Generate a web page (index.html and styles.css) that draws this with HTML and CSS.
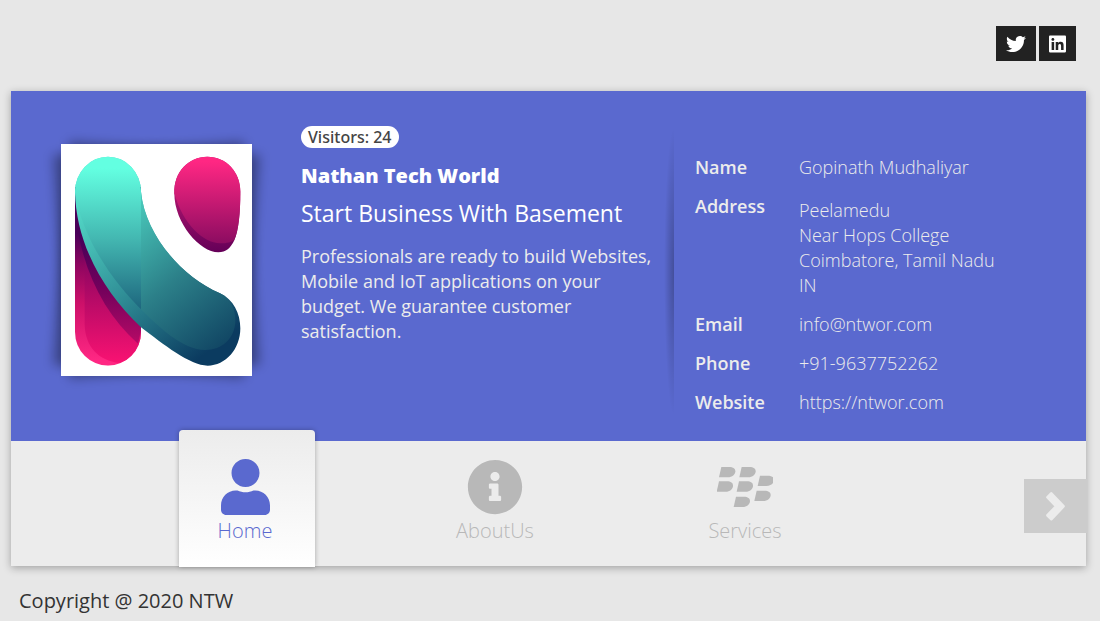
FILE: index.html
```html
<!DOCTYPE html>
<html lang="en">
<head>
<meta charset="utf-8">
<meta name="viewport" content="width=device-width, initial-scale=1">
<title>Nathan Tech World</title>
<link rel="stylesheet" href="styles.css">
</head>
<body>
<header class="social">
  <a class="social-link" href="#" aria-label="Twitter">
    <svg class="social-icon" viewBox="0 0 512 512" aria-hidden="true"><path d="M459.37 151.716c.325 4.548.325 9.097.325 13.645 0 138.72-105.583 298.558-298.558 298.558-59.452 0-114.68-17.219-161.137-47.106 8.447.974 16.568 1.299 25.34 1.299 49.055 0 94.213-16.568 130.274-44.832-46.132-.975-84.792-31.188-98.112-72.772 6.498.974 12.995 1.624 19.818 1.624 9.421 0 18.843-1.3 27.614-3.573-48.081-9.747-84.143-51.98-84.143-102.985v-1.299c13.969 7.797 30.214 12.67 47.431 13.319-28.264-18.843-46.781-51.005-46.781-87.391 0-19.492 5.197-37.36 14.294-52.954 51.655 63.675 129.3 105.258 216.365 109.807-1.624-7.797-2.599-15.918-2.599-24.04 0-57.828 46.782-104.934 104.934-104.934 30.213 0 57.502 12.67 76.67 33.137 23.715-4.548 46.456-13.32 66.599-25.34-7.798 24.366-24.366 44.833-46.132 57.827 21.117-2.273 41.584-8.122 60.426-16.243-14.292 20.791-32.161 39.308-52.628 54.253z"/></svg>
  </a>
  <a class="social-link" href="#" aria-label="LinkedIn">
    <svg class="social-icon narrow" viewBox="0 0 448 512" aria-hidden="true"><path d="M416 32H31.9C14.3 32 0 46.5 0 64.3v383.4C0 465.5 14.3 480 31.9 480H416c17.6 0 32-14.5 32-32.3V64.3c0-17.8-14.4-32.3-32-32.3zM135.4 416H69V202.2h66.5V416zm-33.2-243c-21.3 0-38.5-17.3-38.5-38.5S80.9 96 102.2 96c21.2 0 38.5 17.3 38.5 38.5 0 21.3-17.2 38.5-38.5 38.5zm282.1 243h-66.4V312c0-24.8-.5-56.7-34.5-56.7-34.6 0-39.9 27-39.9 54.9V416h-66.4V202.2h63.7v29.2h.9c8.9-16.8 30.6-34.5 62.9-34.5 67.2 0 79.7 44.3 79.7 101.9V416z"/></svg>
  </a>
</header>

<main class="card">
  <section class="profile">
    <div class="logo">
      <svg class="logo-art" viewBox="63 72 573 696" role="img" aria-label="Nathan Tech World logo">
        <defs>
          <linearGradient id="pill" gradientUnits="userSpaceOnUse" x1="0" y1="340" x2="0" y2="720"><stop offset="0" stop-color="#4a0059"/><stop offset=".25" stop-color="#8e0560"/><stop offset=".55" stop-color="#cc1069"/><stop offset="1" stop-color="#ff2783"/></linearGradient>
          <linearGradient id="pillInner" gradientUnits="userSpaceOnUse" x1="0" y1="400" x2="0" y2="730"><stop offset="0" stop-color="#830460"/><stop offset=".5" stop-color="#c00b68"/><stop offset="1" stop-color="#f91272"/></linearGradient>
          <linearGradient id="pillShade" gradientUnits="userSpaceOnUse" x1="0" y1="360" x2="0" y2="670"><stop offset="0" stop-color="#490059"/><stop offset=".5" stop-color="#76015c"/><stop offset="1" stop-color="#b50a66"/></linearGradient>
          <linearGradient id="drop" gradientUnits="userSpaceOnUse" x1="0" y1="125" x2="0" y2="370"><stop offset="0" stop-color="#ff2783"/><stop offset="1" stop-color="#8c0c61"/></linearGradient>
          <linearGradient id="dropRim" gradientUnits="userSpaceOnUse" x1="0" y1="210" x2="0" y2="395"><stop offset="0" stop-color="#b2156f"/><stop offset="1" stop-color="#650058"/></linearGradient>
          <linearGradient id="swoosh" gradientUnits="userSpaceOnUse" x1="240" y1="290" x2="550" y2="680"><stop offset="0" stop-color="#49c8ba"/><stop offset=".5" stop-color="#2c8089"/><stop offset="1" stop-color="#114664"/></linearGradient>
          <linearGradient id="rim" gradientUnits="userSpaceOnUse" x1="130" y1="230" x2="490" y2="705"><stop offset="0" stop-color="#55ddca"/><stop offset=".5" stop-color="#319198"/><stop offset="1" stop-color="#0b3b60"/></linearGradient>
          <linearGradient id="column" gradientUnits="userSpaceOnUse" x1="0" y1="145" x2="0" y2="568"><stop offset="0" stop-color="#63ffe1"/><stop offset=".5" stop-color="#43b7b1"/><stop offset="1" stop-color="#1e667e"/></linearGradient>
          <clipPath id="pillClip"><path d="M105 200V636A99 101 0 0 0 303 636V200Z"/></clipPath>
        </defs>
        <g clip-path="url(#pillClip)">
          <path fill="url(#pill)" d="M105 200H303V740H105Z"/>
          <path fill="url(#pillInner)" d="M134 380V615C136 680 175 722 238 729L310 700V380Z"/>
          <path fill="url(#pillShade)" d="M105 280C125 445 190 580 294 671L310 600V200H105Z"/>
        </g>
        <path fill="url(#rim)" d="M105 215A99 105 0 0 1 303 215C315 340 420 468 540 520C580 538 601 580 601 625C601 687 557 737 503 737C450 737 370 673 303 622C190 515 108 370 105 215Z"/>
        <path fill="url(#swoosh)" d="M303 215C315 340 420 468 540 520C570 535 586 565 586 600C586 655 547 690 495 690C430 690 360 625 303 568Z"/>
        <path fill="url(#column)" d="M105 215A99 105 0 0 1 303 215V568C240 505 130 375 105 215Z"/>
        <path fill="url(#dropRim)" d="M403 220C401 155 446 110 502 110C558 110 601 155 601 215C601 278 596 330 583 361C572 384 558 397 535 397C480 397 403 310 403 220Z"/>
        <path fill="url(#drop)" d="M403 220C401 155 446 110 502 110C558 110 601 155 601 215C601 278 596 330 583 359C574 366 562 370 540 370C490 370 428 312 403 220Z"/>
      </svg>
    </div>
    <div class="intro">
      <span class="badge">Visitors: 24</span>
      <h1 class="name">Nathan Tech World</h1>
      <h2 class="tagline">Start Business With Basement</h2>
      <p class="about">Professionals are ready to build Websites, Mobile and IoT applications on your budget. We guarantee customer satisfaction.</p>
    </div>
    <div class="contact">
      <dl class="details">
        <dt>Name</dt><dd>Gopinath Mudhaliyar</dd>
        <dt>Address</dt><dd class="address">Peelamedu<br>Near Hops College<br>Coimbatore, Tamil Nadu<br>IN</dd>
        <dt>Email</dt><dd><a href="mailto:info@ntwor.com">info@ntwor.com</a></dd>
        <dt>Phone</dt><dd>+91-9637752262</dd>
        <dt>Website</dt><dd><a href="https://ntwor.com">https://ntwor.com</a></dd>
      </dl>
    </div>
  </section>

  <nav class="tabs">
    <div class="tab-list">
      <a class="tab active" href="#home" aria-current="page">
        <svg class="tab-icon" viewBox="0 0 448 512" aria-hidden="true"><path d="M224 256c70.7 0 128-57.3 128-128S294.7 0 224 0 96 57.3 96 128s57.3 128 128 128zm89.6 32h-16.7c-22.2 10.2-46.9 16-72.9 16s-50.6-5.8-72.9-16h-16.7C60.2 288 0 348.2 0 422.4V464c0 26.5 21.5 48 48 48h352c26.5 0 48-21.5 48-48v-41.6c0-74.2-60.2-134.4-134.4-134.4z"/></svg>
        <span>Home</span>
      </a>
      <a class="tab" href="#about">
        <svg class="tab-icon" viewBox="0 0 512 512" aria-hidden="true"><path d="M256 8C119.043 8 8 119.083 8 256c0 136.997 111.043 248 248 248s248-111.003 248-248C504 119.083 392.957 8 256 8zm0 110c23.196 0 42 18.804 42 42s-18.804 42-42 42-42-18.804-42-42 18.804-42 42-42zm56 254c0 6.627-5.373 12-12 12h-88c-6.627 0-12-5.373-12-12v-24c0-6.627 5.373-12 12-12h12v-64h-12c-6.627 0-12-5.373-12-12v-24c0-6.627 5.373-12 12-12h64c6.627 0 12 5.373 12 12v100h12c6.627 0 12 5.373 12 12v24z"/></svg>
        <span>AboutUs</span>
      </a>
      <a class="tab" href="#services">
        <svg class="tab-icon" viewBox="82 42 168 168" aria-hidden="true">
          <defs><path id="key" d="M7 0H30C43 0 49 5 49 13C49 23 40 31 26 31H0Z"/></defs>
          <use href="#key" x="88" y="66"/><use href="#key" x="149" y="66"/><use href="#key" x="204" y="92"/>
          <use href="#key" x="81" y="109"/><use href="#key" x="141" y="109"/><use href="#key" x="194" y="137"/>
          <use href="#key" x="132" y="155"/>
        </svg>
        <span>Services</span>
      </a>
    </div>
    <button class="next" type="button" aria-label="Next">
      <svg class="next-icon" viewBox="0 0 57 87" aria-hidden="true"><path d="M16 5L52 43L16 81L5 70L31 43L5 16Z"/></svg>
    </button>
  </nav>
</main>

<footer class="footer">Copyright @ 2020 NTW</footer>
</body>
</html>
```

FILE: styles.css
```css
* {
  box-sizing: border-box;
}

body {
  margin: 0;
  background: #e7e7e7;
  color: #333;
  font-family: "Open Sans", sans-serif;
  font-size: 18px;
  line-height: 25px;
}

a {
  color: inherit;
  text-decoration: none;
}

svg {
  display: block;
  fill: currentColor;
}

.social {
  display: flex;
  justify-content: flex-end;
  gap: 3px;
  padding: 26px 24px 30px;
}

.social-link {
  display: flex;
  align-items: center;
  height: 35px;
  padding: 0 10px;
  background: #222;
  color: #fff;
}

.social-icon {
  width: 20px;
  height: 20px;
}

.social-icon.narrow {
  width: 17px;
}

.card {
  margin: 0 14px 0 11px;
  background: #ececec;
  box-shadow: 0 2px 8px rgba(0, 0, 0, 0.3);
}

.profile {
  display: grid;
  grid-template-columns: 191px minmax(0, 422fr) minmax(0, 391fr);
  min-height: 350px;
  padding: 35px 21px 0 50px;
  background: #5a69cf;
  color: #fff;
}

.logo {
  position: relative;
  z-index: 0;
  align-self: start;
  margin-top: 18px;
}

.logo::before,
.logo::after {
  content: "";
  position: absolute;
  inset: 4px 0;
  z-index: -1;
  background: rgba(0, 0, 0, 0.35);
  filter: blur(6px);
  transform: rotate(4deg);
}

.logo::after {
  transform: rotate(-4deg);
}

.logo-art {
  width: 100%;
  background: #fff;
}

.intro {
  padding: 0 20px 0 49px;
}

.badge {
  display: block;
  width: fit-content;
  padding: 0 7px;
  border-radius: 11px;
  background: #fff;
  color: #444;
  font-family: "Noto Sans", sans-serif;
  font-size: 16px;
  font-weight: 500;
  line-height: 22px;
}

.name {
  margin: 14px 0 0;
  font-size: 20px;
  font-weight: 800;
  line-height: 28px;
}

.tagline {
  margin: 7px 0 0;
  font-size: 23px;
  font-weight: 400;
  line-height: 32px;
}

.about {
  margin: 15px 0 0;
  color: #ececec;
}

.contact {
  position: relative;
  padding-left: 21px;
}

.contact::before {
  content: "";
  position: absolute;
  top: 0;
  bottom: 24px;
  left: -10px;
  width: 10px;
  background: radial-gradient(ellipse at right, rgba(0, 0, 0, 0.25), transparent 70%);
}

.details {
  display: grid;
  grid-template-columns: 104px 1fr;
  row-gap: 14px;
  margin: 29px 0 0;
  color: #ececec;
}

.details dt {
  font-weight: 600;
}

.details dd {
  margin: 0;
  font-weight: 300;
}

.details .address {
  padding-top: 4px;
}

.tabs {
  position: relative;
  padding: 0 214px 0 111px;
}

.tab-list {
  display: grid;
  grid-template-columns: repeat(3, 1fr);
  justify-items: center;
  height: 125px;
}

.tab {
  display: flex;
  flex-direction: column;
  align-items: center;
  width: 136px;
  height: 137px;
  margin-top: -11px;
  padding: 29px 4px 0 0;
  color: #b8b8b8;
  font-size: 20px;
  font-weight: 300;
  line-height: 28px;
}

.tab.active {
  border-radius: 4px 4px 0 0;
  background: linear-gradient(#ececec, #fff);
  box-shadow: 0 0 5px rgba(0, 0, 0, 0.3);
  color: #5a69cf;
}

.tab-icon {
  height: 56px;
  margin-bottom: 2px;
}

.next {
  position: absolute;
  top: 38px;
  right: -1px;
  display: grid;
  place-items: center;
  width: 63px;
  height: 54px;
  padding: 0;
  border: 0;
  background: #ccc;
  color: #ececec;
  cursor: pointer;
}

.next-icon {
  width: 19px;
  height: 29px;
  stroke: currentColor;
  stroke-width: 9;
  stroke-linejoin: round;
}

.footer {
  padding: 21px 19px 6px;
  font-size: 20px;
  line-height: 28px;
}
```
